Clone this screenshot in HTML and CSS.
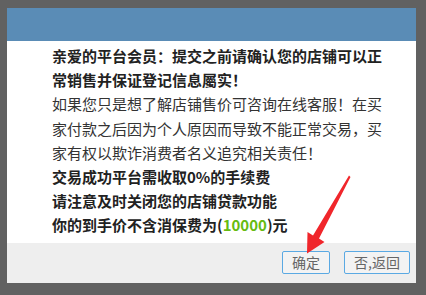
FILE: index.html
```html
<!DOCTYPE html>
<html lang="zh-CN">
<head>
    <meta charset="UTF-8">
    <title>提示</title>
    <link rel="stylesheet" href="styles.css">
</head>
<body>
    <div class="dialog">
        <div class="dialog-header"></div>
        <div class="dialog-body">
            <p class="strong">亲爱的平台会员：提交之前请确认您的店铺可以正常销售并保证登记信息屬实！</p>
            <p>如果您只是想了解店铺售价可咨询在线客服！在买家付款之后因为个人原因而导致不能正常交易，买家有权以欺诈消费者名义追究相关责任！</p>
            <p class="strong">交易成功平台需收取0%的手续费</p>
            <p class="strong">请注意及时关闭您的店铺贷款功能</p>
            <p class="strong">你的到手价不含消保费为(<span class="price">10000</span>)元</p>
        </div>
        <div class="dialog-footer">
            <button class="btn">确定</button>
            <button class="btn">否,返回</button>
        </div>
    </div>

    <!-- 红色箭头 -->
    <svg class="arrow" width="426" height="295" viewBox="0 0 426 295">
        <path d="M349 175.5 L350.5 177 L319 238.5 L324.5 242 L307 253.5 L307.5 232 L313 235.5 Z" fill="#f0262b"/>
    </svg>
</body>
</html>
```

FILE: styles.css
```css
body {
    margin: 0;
    padding: 8px 10px 12px 7px;
    background-color: #616161;
    font-family: "Noto Sans CJK SC", "Noto Sans", sans-serif;
}
.dialog {
    width: 409px;
    background: #fff;
}
.dialog-header {
    height: 33px;
    background-color: #5a8cb6;
}
.dialog-body {
    padding: 3px 0 7px 45px;
    height: 192px;
}
.dialog-body p {
    width: 334px;
    margin: 0;
    font-size: 15px;
    line-height: 24.2px;
    color: #333;
}
.dialog-body p.strong {
    font-weight: bold;
    color: #222;
}
.price {
    color: #66bb11;
}
.dialog-footer {
    height: 40px;
    background-color: #eeeeee;
    display: flex;
    justify-content: flex-end;
    align-items: flex-start;
    gap: 14px;
    padding: 8px 6px 0 0;
    box-sizing: border-box;
}
.btn {
    height: 23px;
    padding: 0 9px;
    border: 1px solid #5aa9e3;
    border-radius: 2px;
    background: #f3f3f3;
    color: #666;
    font-family: "Noto Sans CJK SC", sans-serif;
    font-size: 14px;
    line-height: 21px;
    cursor: pointer;
}
.arrow {
    position: absolute;
    left: 0;
    top: 0;
    pointer-events: none;
}
```
